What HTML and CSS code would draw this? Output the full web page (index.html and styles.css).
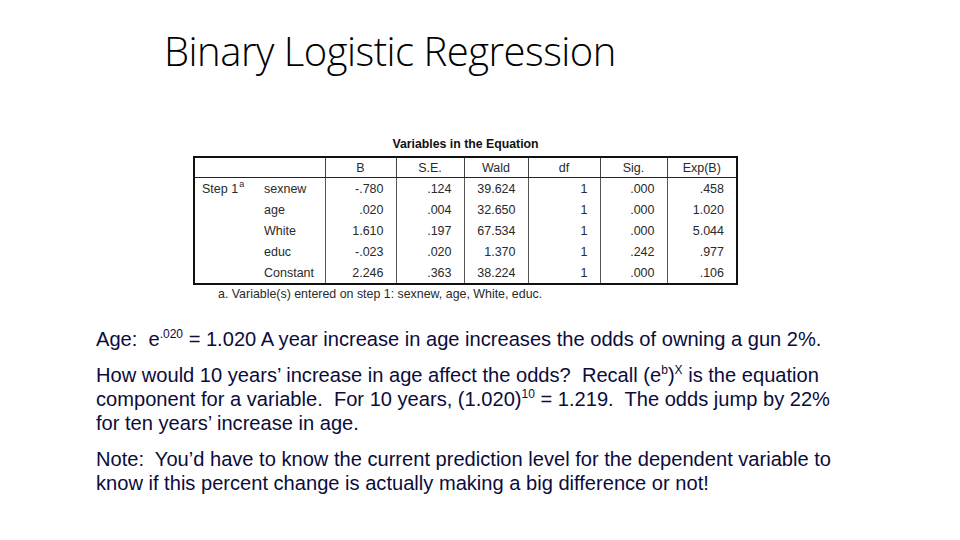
FILE: index.html
```html
<!DOCTYPE html>
<html>
<head>
<meta charset="utf-8">
<link rel="stylesheet" href="styles.css">
</head>
<body>
<div class="slide">
  <h1 class="title">Binary Logistic Regression</h1>
  <div class="spss">
    <div class="spss-caption">Variables in the Equation</div>
    <table class="spss-table">
      <colgroup>
        <col class="c-step"><col class="c-var"><col class="c-b"><col class="c-se"><col class="c-wald"><col class="c-df"><col class="c-sig"><col class="c-exp">
      </colgroup>
      <thead>
        <tr><th colspan="2" class="corner"></th><th>B</th><th>S.E.</th><th>Wald</th><th>df</th><th>Sig.</th><th>Exp(B)</th></tr>
      </thead>
      <tbody>
        <tr><td class="lbl step">Step 1<sup>a</sup></td><td class="lbl var">sexnew</td><td>-.780</td><td>.124</td><td>39.624</td><td>1</td><td>.000</td><td>.458</td></tr>
        <tr><td class="lbl step"></td><td class="lbl var">age</td><td>.020</td><td>.004</td><td>32.650</td><td>1</td><td>.000</td><td>1.020</td></tr>
        <tr><td class="lbl step"></td><td class="lbl var">White</td><td>1.610</td><td>.197</td><td>67.534</td><td>1</td><td>.000</td><td>5.044</td></tr>
        <tr><td class="lbl step"></td><td class="lbl var">educ</td><td>-.023</td><td>.020</td><td>1.370</td><td>1</td><td>.242</td><td>.977</td></tr>
        <tr><td class="lbl step"></td><td class="lbl var">Constant</td><td>2.246</td><td>.363</td><td>38.224</td><td>1</td><td>.000</td><td>.106</td></tr>
      </tbody>
    </table>
    <div class="spss-note">a. Variable(s) entered on step 1: sexnew, age, White, educ.</div>
  </div>
  <div class="body-text">
    <p>Age:&nbsp; e<sup class="sup">.020</sup> = 1.020 A year increase in age increases the odds of owning a gun 2%.</p>
    <p>How would 10 years’ increase in age affect the odds?&nbsp; Recall (e<sup class="sup">b</sup>)<sup class="sup">X</sup> is the equation component for a variable.&nbsp; For 10 years, (1.020)<sup class="sup">10</sup> = 1.219.&nbsp; The odds jump by 22% for ten years’ increase in age.</p>
    <p>Note:&nbsp; You’d have to know the current prediction level for the dependent variable to know if this percent change is actually making a big difference or not!</p>
  </div>
</div>
</body>
</html>
```

FILE: styles.css
```css
html, body {
  margin: 0;
  padding: 0;
  background: #ffffff;
}

.slide {
  width: 960px;
  height: 540px;
  overflow: hidden;
  display: flex;
  flex-direction: column;
}

.title {
  margin: 27px 0 0 164px;
  font-family: "Open Sans", "Liberation Sans", sans-serif;
  font-weight: 300;
  font-size: 40px;
  line-height: 48px;
  color: #000000;
  letter-spacing: -0.5px;
}

.spss {
  margin: 62px 0 0 193px;
  width: 545px;
  font-family: "Liberation Sans", Arial, sans-serif;
  font-size: 12.5px;
  color: #2a2a2a;
}

.spss-caption {
  text-align: center;
  font-weight: bold;
  font-size: 12.3px;
  line-height: 14px;
  margin-bottom: 5px;
  color: #111111;
}

.spss-table {
  border-collapse: collapse;
  table-layout: fixed;
  width: 545px;
  border: 2px solid #111111;
}

.c-step { width: 64px; }
.c-var { width: 67px; }
.c-b { width: 71px; }
.c-se { width: 68px; }
.c-wald { width: 64px; }
.c-df { width: 72px; }
.c-sig { width: 67px; }
.c-exp { width: 70px; }

.spss-table th {
  height: 19px;
  font-weight: normal;
  text-align: center;
  padding: 0;
  border-left: 1px solid #444444;
  border-bottom: 1px solid #222222;
}

.spss-table td {
  height: 21px;
  padding: 0 12px 0 0;
  text-align: right;
  border-left: 1px solid #555555;
}

.spss-table td.lbl {
  text-align: left;
  padding: 0;
  border-left: none;
}

.spss-table td.step {
  padding-left: 7px;
}

.spss-table td.var {
  padding-left: 6px;
}

.spss-table sup {
  font-size: 9px;
  line-height: 0;
  vertical-align: 6px;
  margin-left: 1px;
}

.spss-note {
  margin: 2px 0 0 25px;
  line-height: 14px;
  font-size: 12.4px;
}

.body-text {
  margin: 26px 0 0 96px;
  width: 745px;
  font-family: "Liberation Sans", Arial, sans-serif;
  font-size: 20.1px;
  line-height: 24px;
  color: #0c0c3c;
}

.body-text p {
  margin: 0 0 12px 0;
}

.sup {
  font-size: 12px;
  line-height: 0;
  vertical-align: 8px;
}
```
